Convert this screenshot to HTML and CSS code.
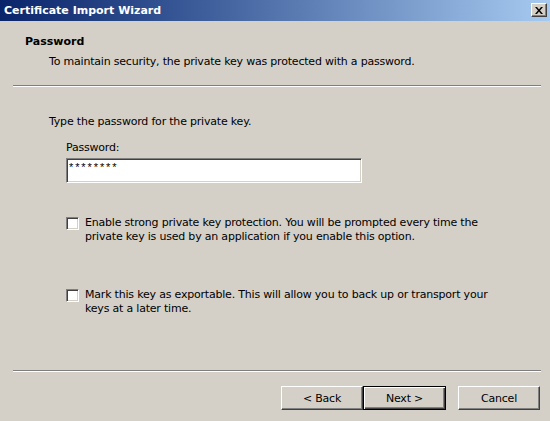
FILE: index.html
```html
<!DOCTYPE html>
<html>
<head>
<meta charset="utf-8">
<link rel="stylesheet" href="styles.css">
</head>
<body>
<div class="window">
  <div class="titlebar">
    <span class="title">Certificate Import Wizard</span>
    <span class="close"><svg width="8" height="7" viewBox="0 0 8 7"><path d="M0 0h2l2 2.5L6 0h2L5 3.5 8 7H6L4 4.5 2 7H0l3-3.5z" fill="#000"/></svg></span>
  </div>
  <div class="header">
    <div class="h-title">Password</div>
    <div class="h-sub">To maintain security, the private key was protected with a password.</div>
  </div>
  <div class="sep sep-top"></div>
  <div class="content">
    <div class="intro">Type the password for the private key.</div>
    <div class="field-label">Password:</div>
    <div class="input"><span class="stars">********</span></div>
    <div class="check check-1">
      <span class="box"></span>
      <span class="ctext">Enable strong private key protection. You will be prompted every time the<br>private key is used by an application if you enable this option.</span>
    </div>
    <div class="check check-2">
      <span class="box"></span>
      <span class="ctext">Mark this key as exportable. This will allow you to back up or transport your<br>keys at a later time.</span>
    </div>
  </div>
  <div class="sep sep-bottom"></div>
  <div class="buttons">
    <span class="btn">&lt; Back</span>
    <span class="btn btn-default">Next &gt;</span>
    <span class="btn btn-cancel">Cancel</span>
  </div>
</div>
</body>
</html>
```

FILE: styles.css
```css
html, body {
  margin: 0;
  padding: 0;
  background: #d4d0c8;
}
.window {
  width: 550px;
  height: 421px;
  background: #d4d0c8;
  font-family: "DejaVu Sans", Verdana, sans-serif;
  font-size: 11px;
  line-height: 13px;
  letter-spacing: -0.2px;
  color: #000;
  overflow: hidden;
}
.titlebar {
  height: 21px;
  background: linear-gradient(to right, #0a246a 0%, #3a5a98 35%, #a6caf0 100%);
  display: flex;
  align-items: center;
  justify-content: space-between;
  padding: 0 3px 0 4px;
  box-sizing: border-box;
}
.title {
  color: #fff;
  font-weight: bold;
  font-size: 11px;
  line-height: 14px;
  letter-spacing: 0;
}
.close {
  width: 16px;
  height: 14px;
  box-sizing: border-box;
  background: #d4d0c8;
  border: 1px solid;
  border-color: #fff #404040 #404040 #fff;
  box-shadow: inset -1px -1px #808080;
  display: flex;
  align-items: center;
  justify-content: center;
  margin-top: -1px;
}
.header {
  padding-top: 14px;
  height: 64px;
  box-sizing: border-box;
}
.h-title {
  font-weight: bold;
  margin-left: 25px;
  letter-spacing: 0;
}
.h-sub {
  margin-left: 49px;
  margin-top: 7px;
}
.sep {
  height: 2px;
  box-sizing: border-box;
  border-top: 1px solid #808080;
  border-bottom: 1px solid #fff;
  margin: 0 9px 0 13px;
}
.content {
  padding-left: 49px;
  height: 283px;
  box-sizing: border-box;
  padding-top: 28px;
}
.field-label {
  margin-top: 13px;
  margin-left: 17px;
}
.input {
  margin-top: 4px;
  margin-left: 17px;
  width: 296px;
  height: 25px;
  box-sizing: border-box;
  background: #fff;
  border: 1px solid;
  border-color: #808080 #fff #fff #808080;
  box-shadow: inset 1px 1px #404040, inset -1px -1px #d4d0c8;
  padding: 2px 0 0 2px;
}
.stars {
  font-family: "Liberation Sans", Arial, sans-serif;
  letter-spacing: 1.9px;
}
.check {
  display: flex;
  align-items: flex-start;
  margin-left: 17px;
  line-height: 14px;
}
.check-1 { margin-top: 33px; }
.check-2 { margin-top: 44px; }
.box {
  width: 13px;
  height: 13px;
  box-sizing: border-box;
  flex: none;
  background: #fff;
  border: 1px solid;
  border-color: #808080 #fff #fff #808080;
  box-shadow: inset 1px 1px #404040, inset -1px -1px #d4d0c8;
  margin-top: 1px;
}
.ctext {
  margin-left: 6px;
}
.buttons {
  display: flex;
  justify-content: flex-end;
  padding: 14px 10px 0 0;
}
.btn {
  width: 82px;
  height: 24px;
  box-sizing: border-box;
  display: flex;
  align-items: center;
  justify-content: center;
  border: 1px solid;
  border-color: #fff #404040 #404040 #fff;
  box-shadow: inset -1px -1px #808080;
}
.btn-default {
  width: 83px;
  border: 1px solid #000;
  box-shadow: inset 1px 1px #fff, inset -1px -1px #404040, inset -2px -2px #808080;
}
.btn-cancel {
  margin-left: 12px;
}
```
